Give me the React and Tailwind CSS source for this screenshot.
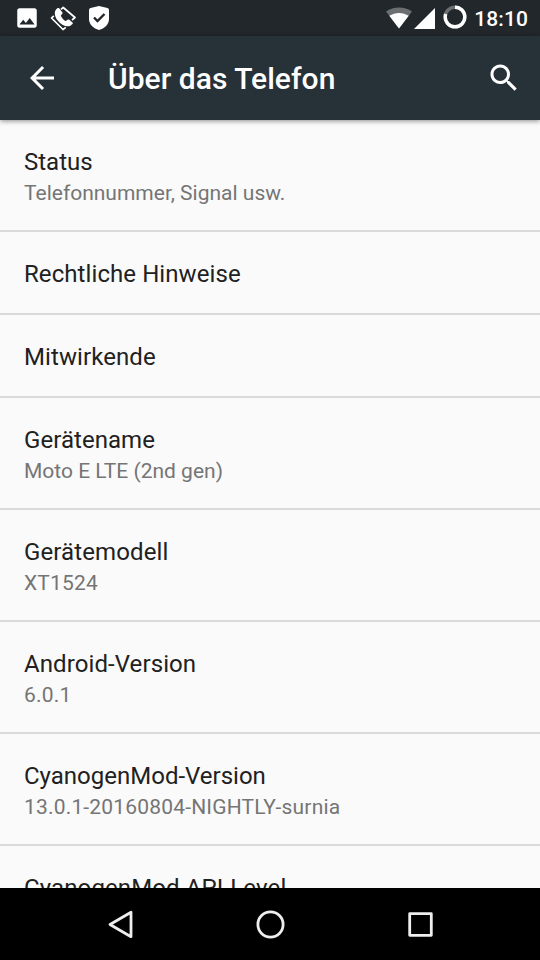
const entries = [
  { title: 'Status', summary: 'Telefonnummer, Signal usw.' },
  { title: 'Rechtliche Hinweise', titleTracking: 'tracking-[0.08px]' },
  { title: 'Mitwirkende', titleTracking: 'tracking-[0.09px]' },
  { title: 'Gerätename', summary: 'Moto E LTE (2nd gen)', titleTracking: 'tracking-[0.05px]' },
  { title: 'Gerätemodell', summary: 'XT1524', titleTracking: 'tracking-[0.12px]', summaryTracking: 'tracking-[0.17px]' },
  { title: 'Android-Version', summary: '6.0.1', titleTracking: 'tracking-[0.09px]', summaryTracking: 'tracking-[0.2px]' },
  { title: 'CyanogenMod-Version', summary: '13.0.1-20160804-NIGHTLY-surnia', summaryTracking: 'tracking-[0.18px]' },
  { title: 'CyanogenMod API-Level', titleTracking: 'tracking-[0.12px]' },
];

function StatusBar() {
  return (
    <div className="h-9 shrink-0 bg-[#21272b] flex items-center justify-between pl-3.5 pr-3">
      <div className="flex items-center gap-2.5 text-white">
        {/* Picture saved */}
        <svg className="w-[26px] h-[26px]" viewBox="0 0 24 24" fill="currentColor">
          <path d="M21 19V5c0-1.100-.9-2-2-2H5c-1.100 0-2 .9-2 2v14c0 1.100.9 2 2 2h14c1.100 0 2-.9 2-2zM8.500 13.500l2.500 3.010L14.500 12l4.500 6H5l3.500-4.500z" />
        </svg>
        {/* Phone in rotated frame */}
        <svg className="w-[26px] h-[26px]" viewBox="0 0 26 26" fill="none">
          <path d="M11 4.300L13.200 2.500L25 12.500L22 15M3.800 10.800L1.500 13L13 24.500L15.800 22.300" stroke="currentColor" strokeWidth="1.700" strokeLinejoin="round" />
          <path d="M6.200 4.200C4.300 6.500 4.200 10.500 7.300 15C11 19.800 16 22.200 20 21L22.500 19C23 18.500 23 18 22.500 17.500L19 14.600C18.500 14.300 18 14.300 17.600 14.700L15.800 16.100C13.500 15 11.700 12.800 10.800 10.400L12.300 8.700C12.700 8.200 12.700 7.700 12.300 7.200L9.200 3.300C8.700 2.800 7.900 2.800 7.400 3.200Z" fill="currentColor" />
        </svg>
        <svg className="w-[26px] h-[26px]" viewBox="0 0 26 26">
          <path d="M13 1L21.500 3Q23 3.500 23 5V14C23 19.500 18.500 23.500 13 25C7.500 23.500 3 19.500 3 14V5Q3 3.500 4.500 3Z" fill="currentColor" />
          <path d="M8 12.500L11.500 16L18.500 9" fill="none" stroke="#21272b" strokeWidth="2.400" />
        </svg>
      </div>
      <div className="flex items-center text-white">
        <svg className="w-[26px] h-[22px]" viewBox="0 0 26 22">
          <path d="M0 4.500C7.300-1 18.700-1 26 4.500L13 21.500Z" fill="#6b6f72" />
          <path d="M3.300 8.800C9 4.900 17 4.900 22.700 8.800L13 21.500Z" fill="currentColor" />
        </svg>
        <svg className="ml-0.5 -mb-px w-[21px] h-[21px]" viewBox="0 0 21 21">
          <path d="M21 0V21H0Z" fill="currentColor" />
        </svg>
        <svg className="ml-2 mb-0.5 w-6 h-6 -rotate-90" viewBox="0 0 24 24" fill="none" strokeWidth="3.400">
          <circle cx="12" cy="12" r="9.800" stroke="#6b6f72" />
          <circle cx="12" cy="12" r="9.800" stroke="currentColor" pathLength="100" strokeDasharray="80 20" />
        </svg>
        <span className="ml-[7px] pt-0.5 text-[21px] leading-[34px] font-medium tracking-[0.1px]">18:10</span>
      </div>
    </div>
  );
}

function Toolbar() {
  return (
    <header className="relative h-21 shrink-0 bg-[#273238] flex items-center pl-6 pr-[18px] text-white shadow-[0_1px_5px_rgba(0,0,0,0.45)]">
      <button aria-label="Nach oben">
        <svg className="w-9 h-9" viewBox="0 0 24 24" fill="currentColor">
          <path d="M20 11H7.830l5.590-5.590L12 4l-8 8 8 8 1.410-1.410L7.830 13H20v-2z" />
        </svg>
      </button>
      <h1 className="ml-12 flex-1 text-[30px] font-medium tracking-[0.03px]">Über das Telefon</h1>
      <button aria-label="Suchen">
        <svg className="w-9 h-9" viewBox="0 0 24 24" fill="currentColor">
          <path d="M15.500 14h-.79l-.28-.27C15.410 12.590 16 11.110 16 9.500 16 5.910 13.090 3 9.500 3S3 5.910 3 9.500 5.910 16 9.500 16c1.610 0 3.090-.59 4.230-1.570l.27.28v.79l5 4.990L20.490 19l-4.990-5zm-6 0C7.010 14 5 11.990 5 9.500S7.010 5 9.500 5 14 7.010 14 9.500 11.990 14 9.500 14z" />
        </svg>
      </button>
    </header>
  );
}

function Entry({ title, summary, titleTracking = '', summaryTracking = '' }) {
  return (
    <li className={`shrink-0 border-b-2 border-[#dadada] px-6 pt-[26px] ${summary ? 'pb-[22px]' : 'pb-[23px]'}`}>
      <p className={`text-2xl/8 text-[#212121] ${titleTracking}`}>{title}</p>
      {summary && <p className={`text-[21px]/[30px] text-[#757575] ${summaryTracking}`}>{summary}</p>}
    </li>
  );
}

function NavBar() {
  return (
    <nav className="h-18 shrink-0 bg-black flex items-center justify-center gap-[114px] text-[#eeeeee]">
      <svg className="w-9 h-9" viewBox="0 0 36 36" fill="none" stroke="currentColor" strokeWidth="2.800" strokeLinejoin="round">
        <path d="M29 6.300V30.700L8 18.500Z" />
      </svg>
      <svg className="w-9 h-9" viewBox="0 0 36 36" fill="none" stroke="currentColor" strokeWidth="2.800">
        <circle cx="18.500" cy="18.500" r="12.600" />
      </svg>
      <svg className="w-9 h-9" viewBox="0 0 36 36" fill="none" stroke="currentColor" strokeWidth="2.800" strokeLinejoin="round">
        <rect x="7.700" y="7.700" width="21.600" height="21.600" />
      </svg>
    </nav>
  );
}

export default function App() {
  return (
    <div className="w-[540px] h-[960px] flex flex-col overflow-hidden bg-[#fafafa] font-[Roboto,sans-serif]">
      <StatusBar />
      <Toolbar />
      <ul className="flex-1 min-h-0 flex flex-col overflow-hidden">
        {entries.map((entry) => (
          <Entry key={entry.title} {...entry} />
        ))}
      </ul>
      <NavBar />
    </div>
  );
}
